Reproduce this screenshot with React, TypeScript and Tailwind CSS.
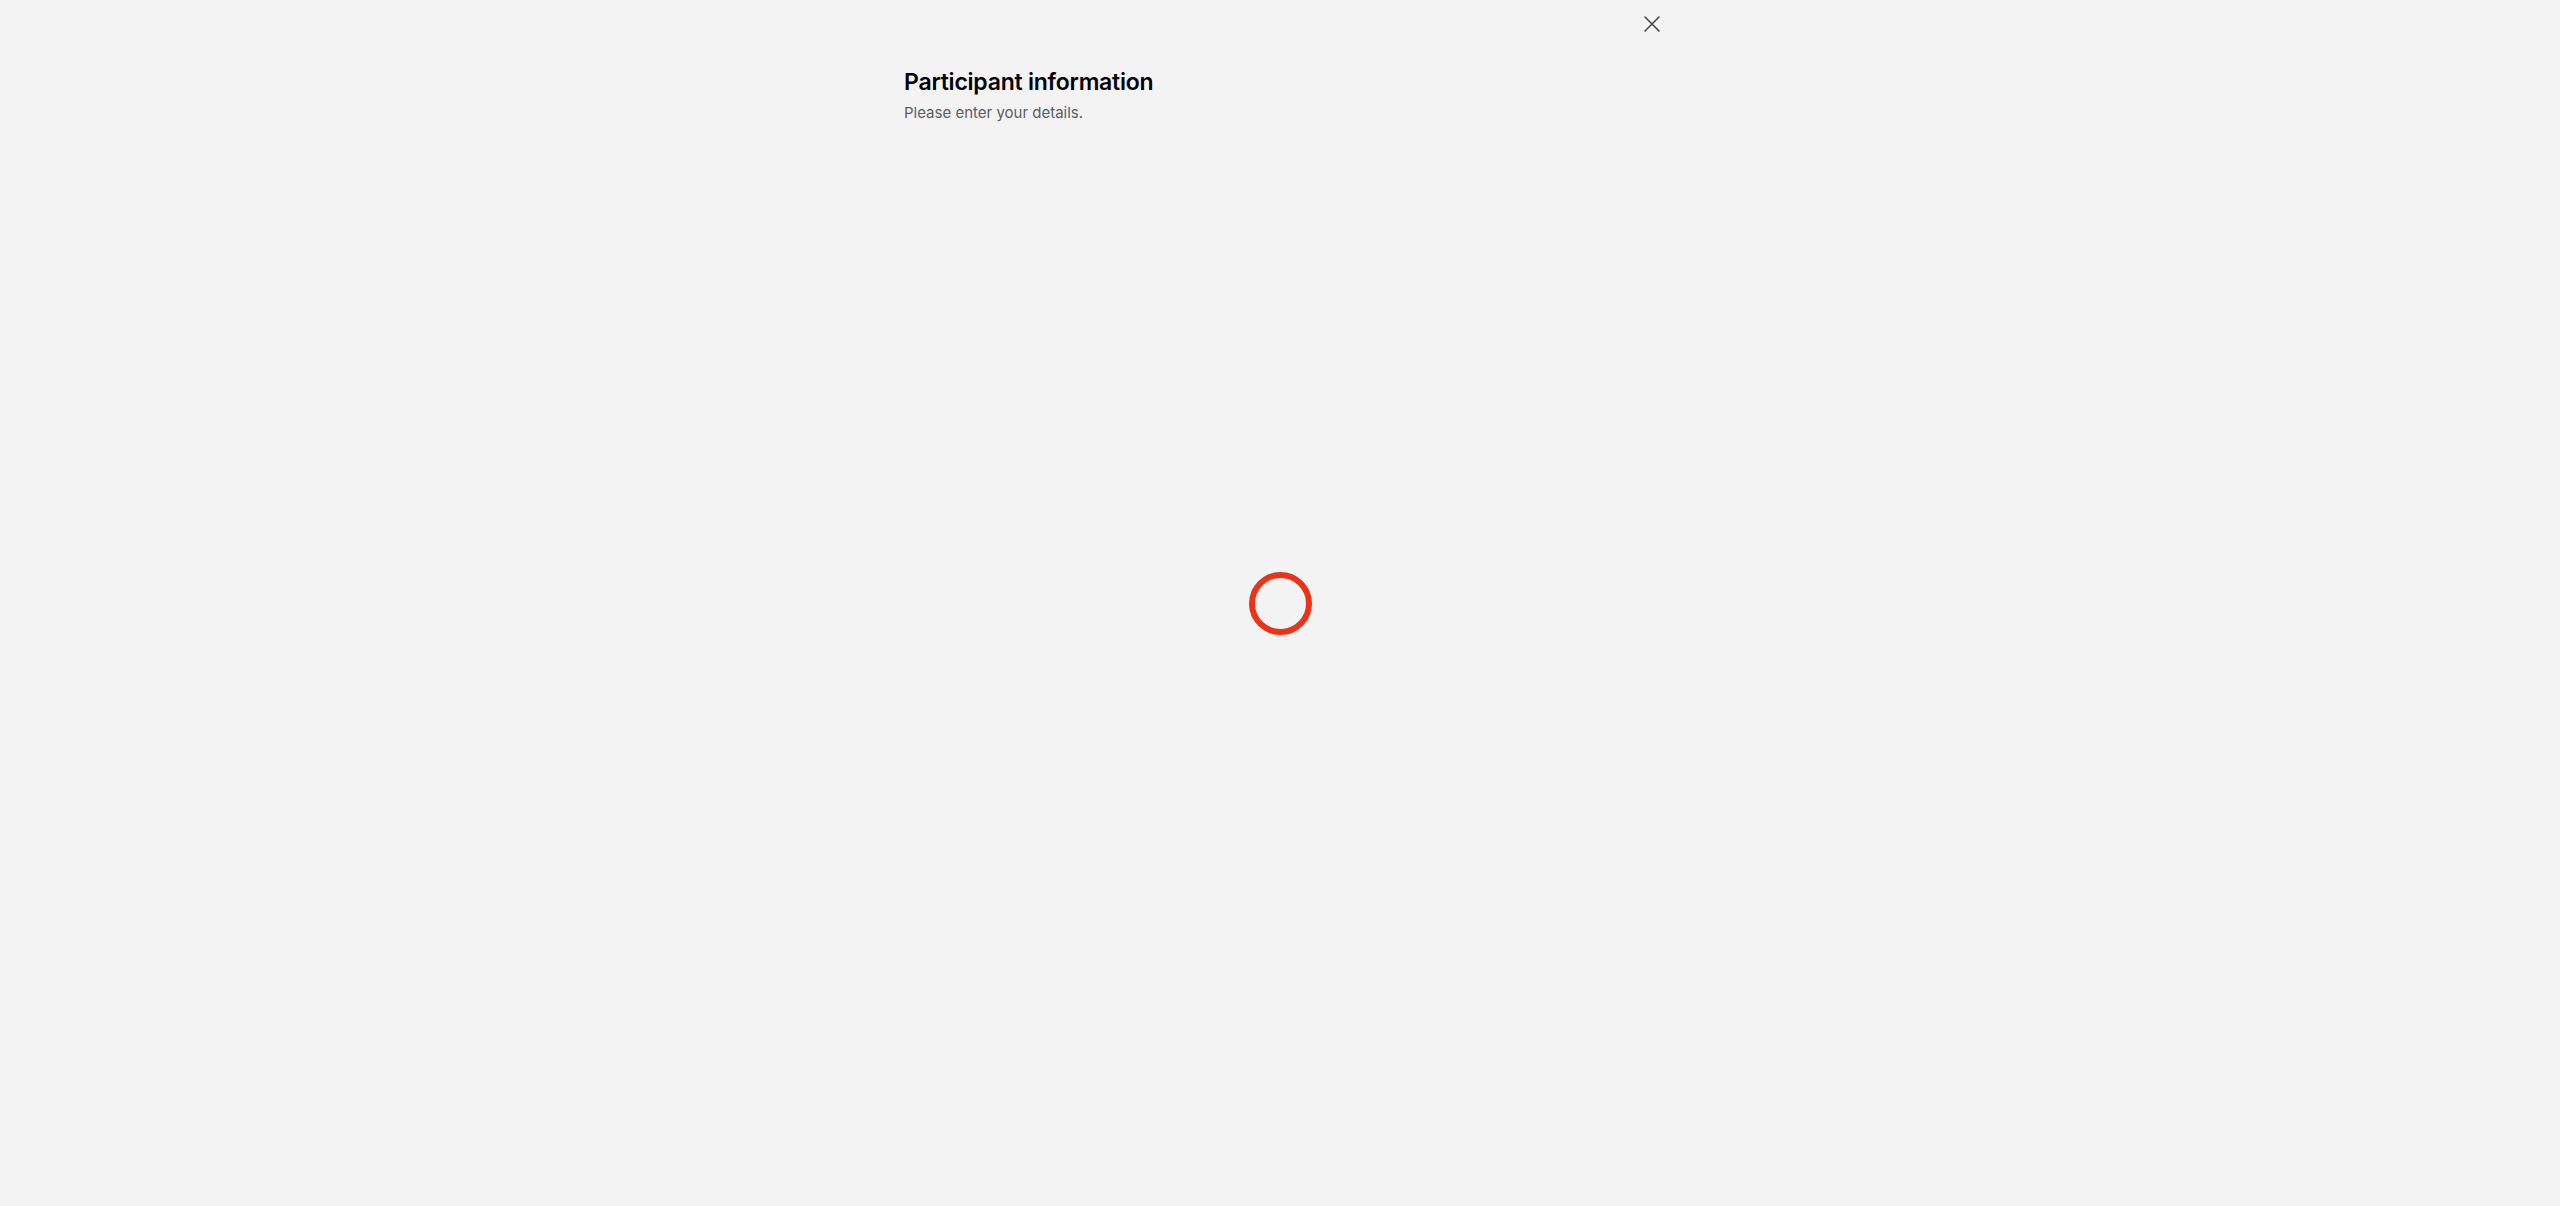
export default function App() {
  return (
    <div className="min-h-screen bg-[#f3f3f3] font-['Inter',sans-serif]">
      <div className="relative mx-auto w-[768px] px-2">
        {/* Close */}
        <button className="absolute right-[4px] top-[16px] flex h-4 w-4 items-center justify-center text-[#444]">
          <svg width="16" height="16" viewBox="0 0 16 16" fill="none" stroke="currentColor" strokeWidth="1.5" strokeLinecap="round">
            <path d="M1 1 L15 15 M15 1 L1 15" />
          </svg>
        </button>

        <header className="pt-[68px]">
          <h1 className="text-[23px] font-semibold leading-[28px] tracking-[-0.01em] text-black">
            Participant information
          </h1>
          <p className="mt-[6px] text-[15px] leading-[22px] text-[#5c5c63]">Please enter your details.</p>
        </header>
      </div>

      {/* Loading ring */}
      <div className="fixed inset-0 flex items-center justify-center">
        <div className="h-[63px] w-[63px] rounded-full border-[6px] border-[#ec3318]" />
      </div>
    </div>
  );
}
